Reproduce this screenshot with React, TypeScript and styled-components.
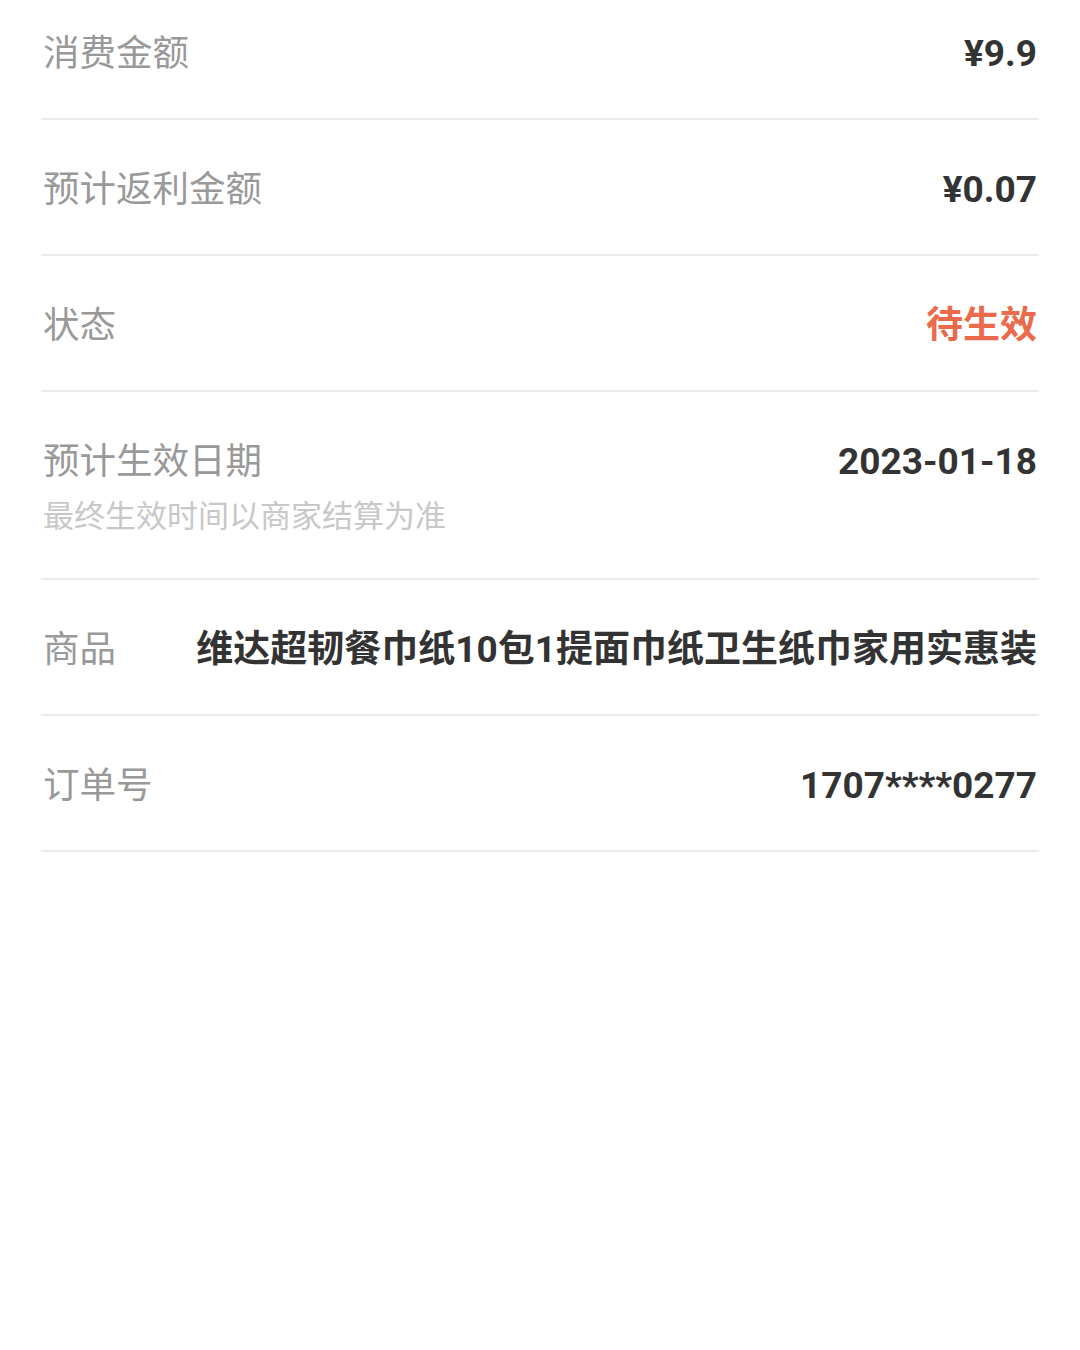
import React from 'react'
import styled, { createGlobalStyle } from 'styled-components'

const GlobalStyle = createGlobalStyle`
  html, body {
    margin: 0;
    padding: 0;
    background: #ffffff;
  }
  body {
    font-family: Roboto, 'Noto Sans CJK SC', sans-serif;
    -webkit-font-smoothing: antialiased;
  }
`

interface Item {
  label: string
  value: string
  note?: string
  tone?: 'normal' | 'warn'
}

const items: Item[] = [
  { label: '消费金额', value: '¥9.9' },
  { label: '预计返利金额', value: '¥0.07' },
  { label: '状态', value: '待生效', tone: 'warn' },
  { label: '预计生效日期', value: '2023-01-18', note: '最终生效时间以商家结算为准' },
  { label: '商品', value: '维达超韧餐巾纸10包1提面巾纸卫生纸巾家用实惠装' },
  { label: '订单号', value: '1707****0277' },
]

export default function App() {
  return (
    <>
      <GlobalStyle />
      <Page>
        <List>
          {items.map(item => (
            <Row key={item.label} $hasNote={!!item.note}>
              <Head>
                <Label>{item.label}</Label>
                <Value $tone={item.tone ?? 'normal'}>{item.value}</Value>
              </Head>
              {item.note && <Note>{item.note}</Note>}
            </Row>
          ))}
        </List>
      </Page>
    </>
  )
}

const Page = styled.div`
  width: 1080px;
  height: 1350px;
  overflow: hidden;
  background: #ffffff;
`

// page is scrolled a little, first row is cut at the top
const List = styled.div`
  margin-top: -16px;
  padding: 0 41px;
  display: flex;
  flex-direction: column;
`

const Row = styled.div<{ $hasNote: boolean }>`
  padding: 50px 2px ${p => (p.$hasNote ? '41px' : '44px')};
  border-bottom: 2px solid #ebebeb;
  display: flex;
  flex-direction: column;
  gap: 15px;
`

const Head = styled.div`
  display: flex;
  align-items: center;
  justify-content: space-between;
  gap: 40px;
  height: 40px;
`

const Label = styled.span`
  flex-shrink: 0;
  font-size: 36.5px;
  line-height: 40px;
  color: #999999;
  font-weight: 400;
`

const Value = styled.span<{ $tone: 'normal' | 'warn' }>`
  font-size: 37px;
  line-height: 40px;
  font-weight: 700;
  white-space: nowrap;
  color: ${p => (p.$tone === 'warn' ? '#ea6a4b' : '#333333')};
  text-align: right;
`

const Note = styled.div`
  font-size: 31px;
  line-height: 40px;
  color: #c8c8c8;
`
